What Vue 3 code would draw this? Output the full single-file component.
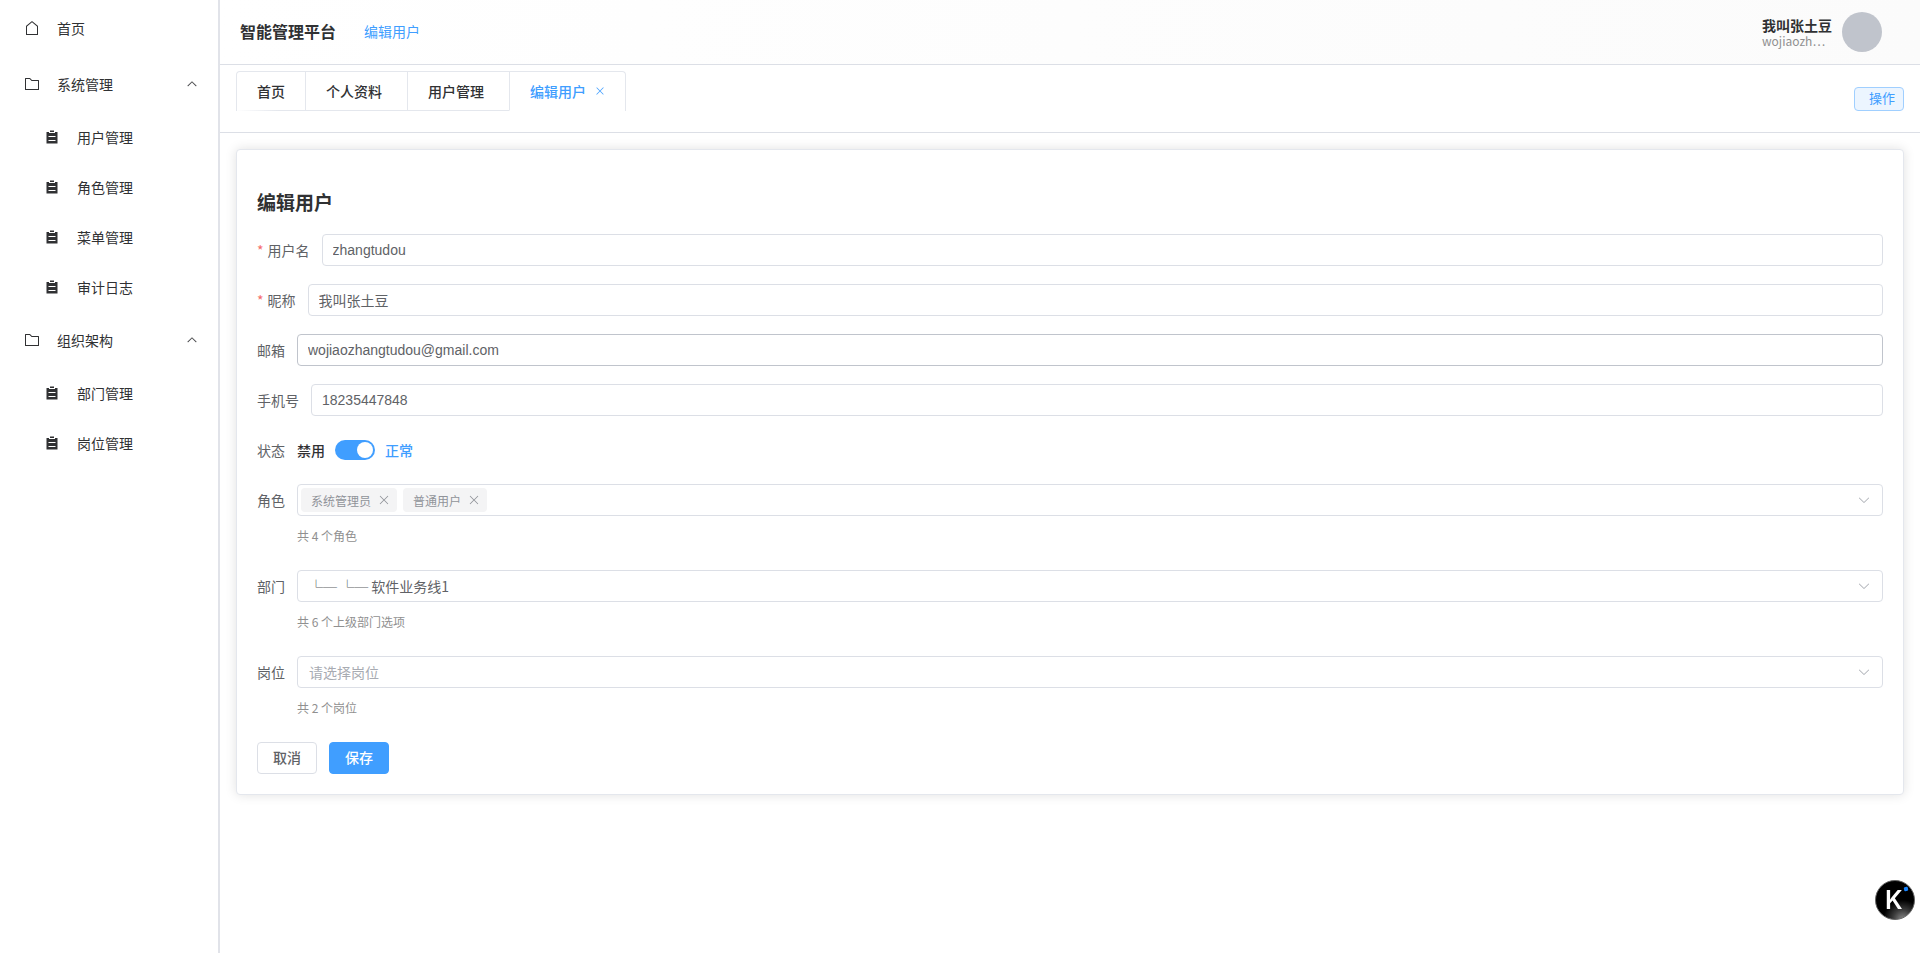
<template>
  <div class="layout">
    <aside class="sidebar">
      <nav>
        <a href="#" class="menu-item">
          <svg class="menu-icon" viewBox="0 0 1024 1024"><path :d="icons.house" /></svg>
          <span>首页</span>
        </a>
        <div v-for="group in menus" :key="group.name">
          <button type="button" class="menu-item" @click="group.open = !group.open">
            <svg class="menu-icon" viewBox="0 0 1024 1024"><path :d="icons.folder" /></svg>
            <span>{{ group.name }}</span>
            <svg class="menu-arrow" :class="{ open: group.open }" viewBox="0 0 1024 1024"><path :d="icons.arrow" /></svg>
          </button>
          <template v-if="group.open">
            <a v-for="item in group.children" :key="item" href="#" class="menu-item sub">
              <svg class="menu-icon" viewBox="0 0 1024 1024"><path :d="icons.list" /></svg>
              <span>{{ item }}</span>
            </a>
          </template>
        </div>
      </nav>
    </aside>

    <div class="main">
      <header class="header">
        <div class="brand">智能管理平台</div>
        <a href="#" class="crumb">编辑用户</a>
        <div class="account">
          <div class="account-text">
            <div class="nickname">我叫张土豆</div>
            <div class="account-name">wojiaozh…</div>
          </div>
          <div class="avatar"></div>
        </div>
      </header>

      <div class="tab-bar">
        <div class="tabs">
          <button
            v-for="tab in tabs"
            :key="tab.name"
            type="button"
            class="tab"
            :class="{ active: tab.name === activeTab, closable: tab.closable }"
            @click="activeTab = tab.name"
          >
            {{ tab.name }}
            <svg v-if="tab.name === activeTab" class="tab-close" viewBox="0 0 1024 1024"><path :d="icons.close" /></svg>
          </button>
        </div>
        <button type="button" class="action-btn">操作</button>
      </div>

      <main class="content">
        <section class="card">
          <h3 class="title">编辑用户</h3>
          <form @submit.prevent>
            <div class="form-item">
              <label class="label required" for="username">用户名</label>
              <input id="username" v-model="form.username" class="input" type="text" />
            </div>
            <div class="form-item">
              <label class="label required" for="nickname">昵称</label>
              <input id="nickname" v-model="form.nickname" class="input" type="text" />
            </div>
            <div class="form-item">
              <label class="label" for="email">邮箱</label>
              <input id="email" v-model="form.email" class="input hovered" type="text" />
            </div>
            <div class="form-item">
              <label class="label" for="phone">手机号</label>
              <input id="phone" v-model="form.phone" class="input" type="text" />
            </div>
            <div class="form-item">
              <label class="label" for="status">状态</label>
              <div class="switch-row">
                <span class="switch-text" :class="{ on: !form.status }">禁用</span>
                <input id="status" v-model="form.status" class="switch" type="checkbox" />
                <span class="switch-text" :class="{ on: form.status }">正常</span>
              </div>
            </div>
            <div class="form-item">
              <label class="label" for="roles">角色</label>
              <div class="field">
                <div class="select-box tags">
                  <span v-for="role in form.roles" :key="role" class="tag">
                    {{ role }}
                    <button type="button" class="tag-close" @click="removeRole(role)">
                      <svg viewBox="0 0 1024 1024"><path :d="icons.close" /></svg>
                    </button>
                  </span>
                  <input id="roles" class="tag-input" type="text" />
                  <svg class="select-arrow" viewBox="0 0 1024 1024"><path :d="icons.arrow" /></svg>
                </div>
                <div class="hint">共 4 个角色</div>
              </div>
            </div>
            <div class="form-item">
              <label class="label" for="dept">部门</label>
              <div class="field">
                <div class="select-box">
                  <select id="dept" v-model="form.dept" class="select">
                    <option value="1">└─ └─ 软件业务线1</option>
                  </select>
                  <svg class="select-arrow" viewBox="0 0 1024 1024"><path :d="icons.arrow" /></svg>
                </div>
                <div class="hint">共 6 个上级部门选项</div>
              </div>
            </div>
            <div class="form-item">
              <label class="label" for="post">岗位</label>
              <div class="field">
                <div class="select-box">
                  <select id="post" v-model="form.post" class="select" :class="{ empty: !form.post }">
                    <option value="">请选择岗位</option>
                  </select>
                  <svg class="select-arrow" viewBox="0 0 1024 1024"><path :d="icons.arrow" /></svg>
                </div>
                <div class="hint">共 2 个岗位</div>
              </div>
            </div>
            <div class="buttons">
              <button type="button" class="btn">取消</button>
              <button type="submit" class="btn primary">保存</button>
            </div>
          </form>
        </section>
      </main>
    </div>

    <button type="button" class="float-logo">
      <svg viewBox="0 0 40 40">
        <defs>
          <radialGradient id="moon" cx="0.7" cy="1" r="0.5">
            <stop offset="0" stop-color="#8a8a8a" />
            <stop offset="0.5" stop-color="#3c3c3c" />
            <stop offset="1" stop-color="#000" />
          </radialGradient>
        </defs>
        <circle cx="20" cy="20" r="19.5" fill="url(#moon)" stroke="#666" />
        <text x="10" y="29" class="logo-letter">K</text>
        <rect x="29" y="7" width="4" height="4" rx="1" fill="#1684ff" transform="rotate(-12 31 9)" />
      </svg>
    </button>
  </div>
</template>

<script setup>
import { ref, reactive } from 'vue';

const icons = {
  house: 'M192 413.952V896h640V413.952L512 147.328 192 413.952zM139.52 374.4l352-293.312a32 32 0 0 1 40.96 0l352 293.312A32 32 0 0 1 896 398.976V928a32 32 0 0 1-32 32H160a32 32 0 0 1-32-32V398.976a32 32 0 0 1 11.52-24.576z',
  folder: 'M128 192v640h768V320H485.76L357.504 192H128zm-32-64h287.872l128.384 128H928a32 32 0 0 1 32 32v576a32 32 0 0 1-32 32H96a32 32 0 0 1-32-32V160a32 32 0 0 1 32-32z',
  list: 'M704 192h160v736H160V192h160v64h384v-64zM288 512h448v-64H288v64zm0 256h448v-64H288v64zm96-576V96h256v96H384z',
  arrow: 'M831.872 340.864 512 652.672 192.128 340.864a30.592 30.592 0 0 0-42.752 0 29.12 29.12 0 0 0 0 41.6L489.664 714.24a32 32 0 0 0 44.672 0l340.288-331.712a29.12 29.12 0 0 0 0-41.728 30.592 30.592 0 0 0-42.752 0z',
  close: 'M764.288 214.592 512 466.88 259.712 214.592a31.936 31.936 0 0 0-45.12 45.12L466.752 512 214.528 764.224a31.936 31.936 0 1 0 45.12 45.184L512 557.184l252.288 252.288a31.936 31.936 0 0 0 45.12-45.12L557.12 512.064l252.288-252.352a31.936 31.936 0 1 0-45.12-45.184z'
};

const menus = reactive([
  { name: '系统管理', open: true, children: ['用户管理', '角色管理', '菜单管理', '审计日志'] },
  { name: '组织架构', open: true, children: ['部门管理', '岗位管理'] }
]);

const tabs = [
  { name: '首页', closable: false },
  { name: '个人资料', closable: true },
  { name: '用户管理', closable: true },
  { name: '编辑用户', closable: true }
];
const activeTab = ref('编辑用户');

const form = reactive({
  username: 'zhangtudou',
  nickname: '我叫张土豆',
  email: 'wojiaozhangtudou@gmail.com',
  phone: '18235447848',
  status: true,
  roles: ['系统管理员', '普通用户'],
  dept: '1',
  post: ''
});

const removeRole = (role) => {
  form.roles = form.roles.filter((item) => item !== role);
};
</script>

<style>
body {
  margin: 0;
  background: #fff;
}
</style>

<style scoped>
.layout {
  display: flex;
  min-height: 100vh;
  font-family: "Noto Sans CJK SC", sans-serif;
  font-size: 14px;
  color: #303133;
}

.layout *,
.layout *::before {
  box-sizing: border-box;
}

button {
  font-family: inherit;
  cursor: pointer;
}

a {
  text-decoration: none;
}

svg {
  fill: currentColor;
}

.sidebar {
  flex: none;
  width: 220px;
  border-right: 2px solid #e1e3e9;
}

.menu-item {
  display: flex;
  align-items: center;
  width: 100%;
  height: 56px;
  padding: 0 20px;
  border: none;
  background: none;
  font-size: 14px;
  color: #303133;
}

.menu-item.sub {
  height: 50px;
  padding-left: 40px;
}

.menu-icon {
  width: 16px;
  height: 16px;
  margin: 0 17px 0 4px;
}

.menu-arrow {
  width: 12px;
  height: 12px;
  margin-left: auto;
  stroke: currentColor;
  stroke-width: 20;
}

.menu-arrow.open {
  transform: rotate(180deg);
}

.main {
  flex: 1;
  min-width: 0;
}

.header {
  display: flex;
  align-items: center;
  height: 65px;
  padding: 0 38px 0 20px;
  border-bottom: 1px solid #dcdfe6;
  background: linear-gradient(90deg, #fff, #fbfbfb);
}

.brand {
  padding-bottom: 2px;
  font-size: 16px;
  font-weight: 700;
}

.crumb {
  margin-left: 28px;
  padding-bottom: 2px;
  color: #409eff;
}

.account {
  display: flex;
  align-items: center;
  gap: 10px;
  margin-left: auto;
}

.account-text {
  width: 70px;
}

.nickname {
  line-height: 18px;
  font-weight: 700;
}

.account-name {
  line-height: 14px;
  font-size: 12px;
  white-space: nowrap;
  color: #909090;
}

.avatar {
  width: 40px;
  height: 40px;
  border-radius: 50%;
  background: #c0c4cc;
}

.tab-bar {
  display: flex;
  align-items: center;
  justify-content: space-between;
  height: 68px;
  padding: 0 16px;
  border-bottom: 1px solid #dcdfe6;
}

.tabs {
  display: flex;
  height: 40px;
  margin-bottom: 15px;
  border: 1px solid #e4e7ed;
  border-bottom: none;
  border-radius: 4px 4px 0 0;
}

.tab {
  display: flex;
  align-items: center;
  padding: 0 20px;
  border: none;
  border-bottom: 1px solid #e4e7ed;
  background: none;
  font-size: 14px;
  font-weight: 500;
  color: #303133;
}

.tab:first-child {
  border-image: linear-gradient(90deg, #fff, #e4e7ed 60%) 1;
}

.tab + .tab {
  border-left: 1px solid #e4e7ed;
}

.tab.closable {
  padding-right: 25px;
}

.tab.active {
  padding-right: 19px;
  border-bottom-color: #fff;
  color: #409eff;
}

.tab-close {
  width: 12px;
  height: 12px;
  margin-left: 8px;
}

.action-btn {
  height: 24px;
  padding: 0 8px 2px 14px;
  border: 1px solid #a0cfff;
  border-radius: 4px;
  background: #ecf5ff;
  line-height: 20px;
  font-size: 13px;
  color: #409eff;
}

.content {
  padding: 16px;
}

.card {
  padding: 20px;
  border: 1px solid #e4e7ed;
  border-radius: 4px;
  background: #fff;
  box-shadow: 0 0 12px rgba(0, 0, 0, 0.12);
}

.title {
  margin: 18px 0;
  line-height: 28px;
  font-size: 19px;
  font-weight: 700;
}

.form-item {
  display: flex;
  align-items: flex-start;
  margin-bottom: 18px;
}

.label {
  flex: none;
  padding-right: 12px;
  line-height: 32px;
  color: #606266;
}

.label.required::before {
  content: "*";
  margin-right: 4px;
  color: #f56c6c;
}

.input {
  flex: 1;
  min-width: 0;
  height: 32px;
  padding: 0 10px;
  border: 1px solid #dcdfe6;
  border-radius: 4px;
  outline: none;
  font-family: "Liberation Sans", "Noto Sans CJK SC", sans-serif;
  font-size: 14px;
  color: #606266;
}

.input:hover,
.input.hovered {
  border-color: #c0c4cc;
}

.switch-row {
  display: flex;
  align-items: center;
  gap: 10px;
  height: 32px;
}

.switch-text {
  font-weight: 500;
}

.switch-text.on {
  color: #409eff;
}

.switch {
  appearance: none;
  display: flex;
  width: 40px;
  height: 20px;
  margin: 0;
  padding: 2px;
  border-radius: 10px;
  background: #dcdfe6;
  cursor: pointer;
}

.switch::before {
  content: "";
  width: 16px;
  height: 16px;
  border-radius: 50%;
  background: #fff;
}

.switch:checked {
  justify-content: flex-end;
  background: #409eff;
}

.field {
  flex: 1;
  min-width: 0;
}

.select-box {
  position: relative;
  display: flex;
  align-items: center;
  height: 32px;
  border: 1px solid #dcdfe6;
  border-radius: 4px;
}

.select {
  appearance: none;
  width: 100%;
  height: 30px;
  padding: 0 32px 0 11px;
  border: none;
  outline: none;
  background: none;
  font-family: inherit;
  font-size: 14px;
  color: #606266;
}

.select.empty {
  color: #a8abb2;
}

.select-arrow {
  position: absolute;
  right: 11px;
  width: 14px;
  height: 14px;
  color: #a8abb2;
  pointer-events: none;
}

.tags {
  gap: 6px;
  padding-left: 3px;
}

.tag {
  display: flex;
  align-items: center;
  height: 24px;
  padding: 0 6px 0 10px;
  border-radius: 4px;
  background: #f4f4f5;
  font-size: 12px;
  color: #909399;
}

.tag-close {
  display: flex;
  width: 14px;
  height: 14px;
  margin-left: 6px;
  padding: 0;
  border: none;
  background: none;
  color: #909399;
}

.tag-input {
  flex: 1;
  min-width: 0;
  height: 24px;
  border: none;
  outline: none;
  background: none;
}

.hint {
  margin-top: 4px;
  line-height: 32px;
  font-size: 12px;
  color: #909090;
}

.buttons {
  display: flex;
  gap: 12px;
}

.btn {
  height: 32px;
  padding: 0 15px 2px;
  border: 1px solid #dcdfe6;
  border-radius: 4px;
  background: #fff;
  font-size: 14px;
  font-weight: 500;
  color: #606266;
}

.btn.primary {
  border-color: #409eff;
  background: #409eff;
  color: #fff;
}

.float-logo {
  position: fixed;
  right: 5px;
  bottom: 33px;
  width: 40px;
  height: 40px;
  padding: 0;
  border: none;
  background: none;
}

.logo-letter {
  font-family: Inter, sans-serif;
  font-size: 25px;
  font-weight: 600;
  fill: #fff;
}
</style>
